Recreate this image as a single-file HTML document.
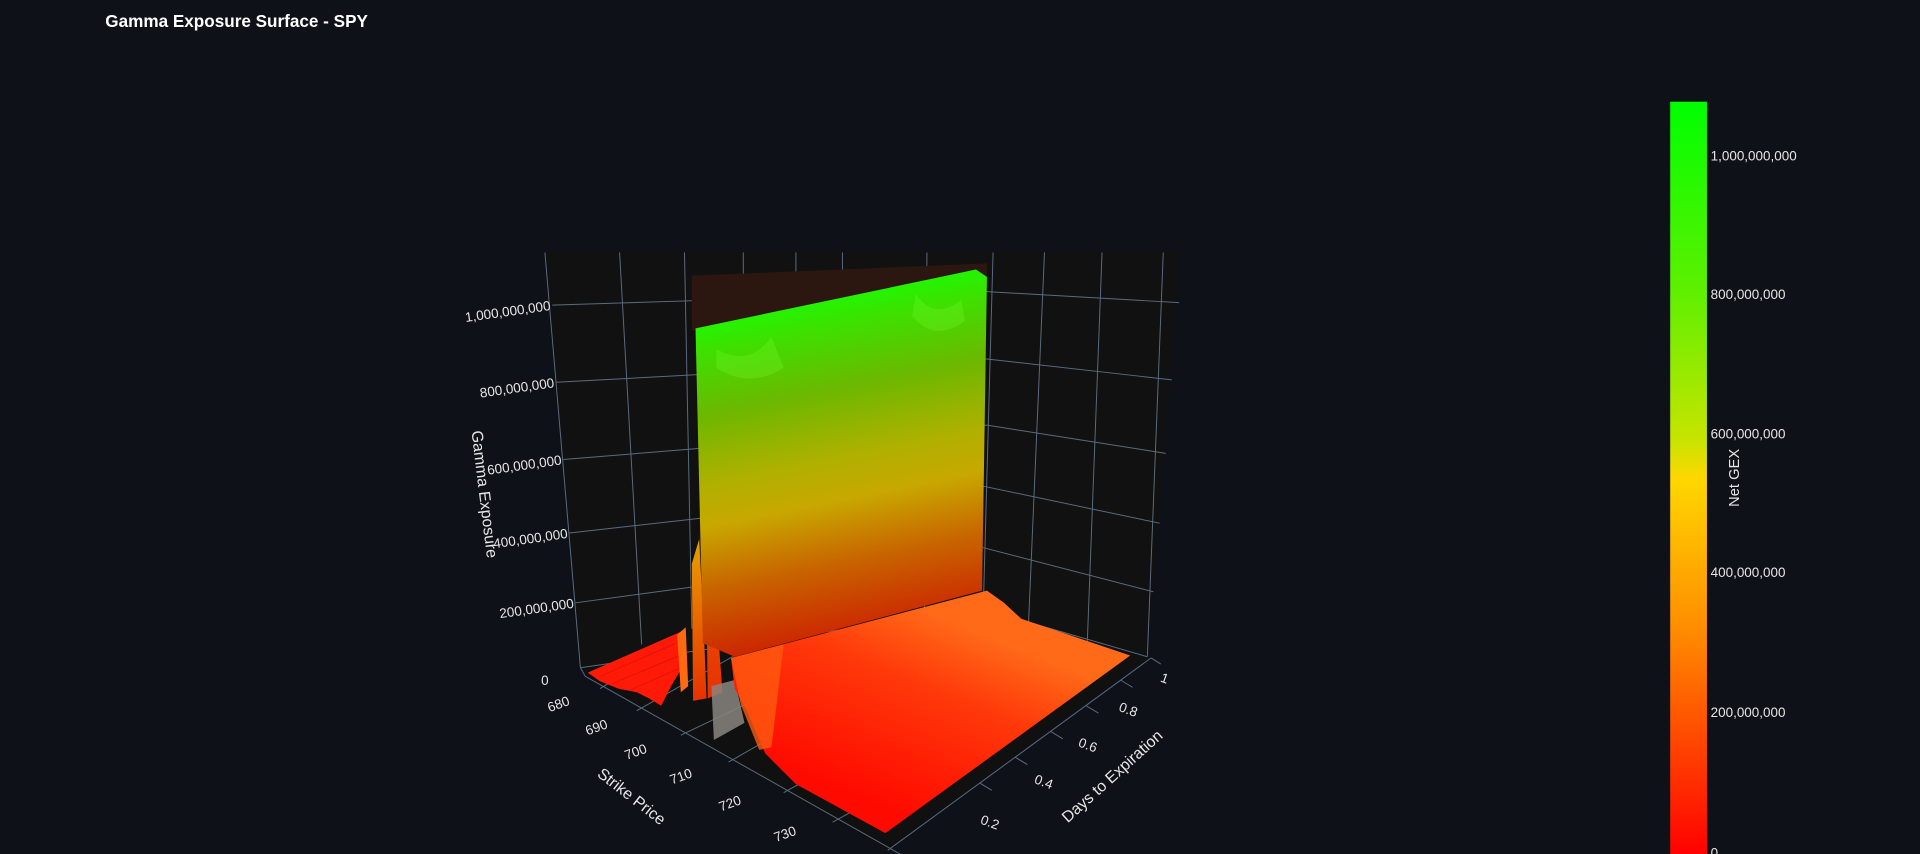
<!DOCTYPE html>
<html><head><meta charset="utf-8"><style>
html,body{margin:0;padding:0;background:#0e1117;width:1920px;height:854px;overflow:hidden}
svg{display:block}
text{font-family:"Liberation Sans","DejaVu Sans",sans-serif;fill:#e6e6e6}
</style></head><body>
<svg width="1920" height="854" viewBox="0 0 1568 697" preserveAspectRatio="none">
<defs>
<linearGradient id="cb" x1="0" y1="0" x2="0" y2="1">
<stop offset="0" stop-color="#00ff00"/><stop offset="0.25" stop-color="#5ef000"/>
<stop offset="0.45" stop-color="#c8e400"/><stop offset="0.5" stop-color="#ffd700"/>
<stop offset="0.7" stop-color="#ff8c00"/><stop offset="1" stop-color="#ff0000"/>
</linearGradient>
<linearGradient id="wall" gradientUnits="userSpaceOnUse" x1="690" y1="230" x2="745" y2="505">
<stop offset="0" stop-color="#14ff00"/><stop offset="0.12" stop-color="#3ee000"/>
<stop offset="0.3" stop-color="#6cb800"/><stop offset="0.5" stop-color="#b0b000"/>
<stop offset="0.62" stop-color="#c8a800"/><stop offset="0.8" stop-color="#c86400"/>
<stop offset="1" stop-color="#cc2800"/>
</linearGradient>
<linearGradient id="floor" gradientUnits="userSpaceOnUse" x1="760" y1="500" x2="700" y2="650">
<stop offset="0" stop-color="#ff6a18"/><stop offset="0.35" stop-color="#ff3a0a"/><stop offset="1" stop-color="#ff0a00"/>
</linearGradient>
<linearGradient id="spike" x1="0" y1="0" x2="0" y2="1">
<stop offset="0" stop-color="#e8a000"/><stop offset="1" stop-color="#e83000"/>
</linearGradient>
</defs>
<text x="86" y="22" font-size="14" font-weight="bold" style="fill:#fff">Gamma Exposure Surface - SPY</text>

<polygon points="445,206 808,206 803,497 474,545" fill="#111111"/>
<polygon points="808,206 963,206 937,536 803,497" fill="#111111"/>
<polygon points="474,545 803,497 937,536 725,694 478,552" fill="#101010"/>
<g stroke="#5a6b80" stroke-width="0.8" fill="none">
<line x1="451" y1="249" x2="806" y2="238"/>
<line x1="454" y1="312" x2="806" y2="293"/>
<line x1="460" y1="375" x2="806" y2="347"/>
<line x1="465" y1="435" x2="804" y2="397"/>
<line x1="470" y1="492" x2="803" y2="447"/>
<line x1="474" y1="545" x2="803" y2="497"/>
<line x1="806" y1="238" x2="963" y2="247"/>
<line x1="806" y1="293" x2="957" y2="310"/>
<line x1="806" y1="347" x2="952" y2="370"/>
<line x1="804" y1="397" x2="947" y2="427"/>
<line x1="803" y1="447" x2="942" y2="483"/>
<line x1="803" y1="497" x2="937" y2="536"/>
<line x1="445" y1="206" x2="474" y2="545"/>
<line x1="506" y1="206" x2="524" y2="526"/>
<line x1="559" y1="206" x2="565" y2="513"/>
<line x1="607" y1="206" x2="608" y2="510"/>
<line x1="650" y1="206" x2="650" y2="507"/>
<line x1="688" y1="206" x2="688" y2="505"/>
<line x1="757" y1="206" x2="755" y2="500"/>
<line x1="811" y1="206" x2="803" y2="497"/>
<line x1="853" y1="206" x2="840" y2="508"/>
<line x1="900" y1="206" x2="888" y2="523"/>
<line x1="950" y1="206" x2="937" y2="536"/>
<line x1="474" y1="545" x2="478" y2="552"/>
<line x1="478" y1="552" x2="735" y2="697"/>
<line x1="725" y1="694" x2="940" y2="537"/>
<line x1="490" y1="562" x2="560" y2="520"/>
<line x1="520" y1="580" x2="600" y2="535"/>
<line x1="556" y1="600" x2="640" y2="560"/>
<line x1="595" y1="622" x2="660" y2="585"/>
<line x1="640" y1="647" x2="670" y2="630"/>
<line x1="680" y1="671" x2="700" y2="660"/>
<line x1="940" y1="537" x2="948" y2="542"/>
<line x1="915" y1="555" x2="925" y2="561"/>
<line x1="887" y1="576" x2="897" y2="582"/>
<line x1="858" y1="597" x2="868" y2="603"/>
<line x1="829" y1="618" x2="839" y2="624"/>
<line x1="800" y1="639" x2="810" y2="645"/>
</g>

<polygon points="565,225 806,215 806,232 565,270" fill="#2c1710"/>
<polygon points="480,549 555,516 560,540 548,560 540,576 530,570 520,565 505,562 490,556" fill="#ff1a08"/>
<g stroke="#cc1000" stroke-width="0.8" opacity="0.6"><line x1="490" y1="552" x2="552" y2="525"/><line x1="500" y1="558" x2="555" y2="535"/><line x1="515" y1="563" x2="556" y2="545"/></g>
<polygon points="553,518 560,512 562,560 556,565" fill="#ff6a10"/>
<polygon points="565,460 571,440 575,520 577,570 566,572" fill="url(#spike)"/>
<polygon points="574,280 583,470 590,565 578,570" fill="url(#spike)"/>
<polygon points="581,560 600,555 608,590 583,604" fill="#8a8580" opacity="0.85"/>
<polygon points="568,268 797,220 806,226 802,482 600,536 574,525" fill="url(#wall)"/>
<path d="M585,285 Q612,300 630,275 L640,300 Q612,318 585,300 Z" fill="#7cff30" opacity="0.25"/>
<path d="M748,240 Q763,262 785,245 L788,262 Q763,280 745,258 Z" fill="#7cff30" opacity="0.25"/>
<polygon points="597,537 806,482 820,492 834,505 923,535 723,680 650,640 625,615 610,580 600,562" fill="url(#floor)"/>
<polygon points="597,537 640,526 630,610 620,612 605,575" fill="#ff5a10" opacity="0.8"/>

<g font-size="11" text-anchor="end">
<text x="450" y="253" transform="rotate(-8 450 253)">1,000,000,000</text>
<text x="453" y="316" transform="rotate(-8 453 316)">800,000,000</text>
<text x="459" y="379" transform="rotate(-8 459 379)">600,000,000</text>
<text x="464" y="439" transform="rotate(-8 464 439)">400,000,000</text>
<text x="469" y="496" transform="rotate(-8 469 496)">200,000,000</text>
<text x="448" y="559">0</text>
<text x="466" y="575" transform="rotate(-20 466 575)">680</text>
<text x="497" y="594" transform="rotate(-20 497 594)">690</text>
<text x="529" y="614" transform="rotate(-20 529 614)">700</text>
<text x="566" y="634" transform="rotate(-20 566 634)">710</text>
<text x="606" y="656" transform="rotate(-20 606 656)">720</text>
<text x="651" y="681" transform="rotate(-20 651 681)">730</text>
</g>
<g font-size="11">
<text x="800" y="672" transform="rotate(20 800 672)">0.2</text>
<text x="844" y="639" transform="rotate(20 844 639)">0.4</text>
<text x="880" y="609" transform="rotate(20 880 609)">0.6</text>
<text x="913" y="580" transform="rotate(20 913 580)">0.8</text>
<text x="947" y="556" transform="rotate(20 947 556)">1</text>
</g>
<text x="385" y="352" font-size="13" transform="rotate(83 385 352)">Gamma Exposure</text>
<text x="487" y="633" font-size="13" transform="rotate(38 487 633)">Strike Price</text>
<text x="872" y="672" font-size="13" transform="rotate(-42 872 672)">Days to Expiration</text>

<rect x="1364" y="83" width="30" height="616" fill="url(#cb)"/>
<g font-size="11">
<text x="1397" y="131">1,000,000,000</text>
<text x="1397" y="244">800,000,000</text>
<text x="1397" y="358">600,000,000</text>
<text x="1397" y="471">400,000,000</text>
<text x="1397" y="585">200,000,000</text>
<text x="1397" y="700">0</text>
</g>
<text x="1420" y="390" font-size="12" text-anchor="middle" transform="rotate(-90 1420 390)">Net GEX</text>
</svg>
</body></html>
